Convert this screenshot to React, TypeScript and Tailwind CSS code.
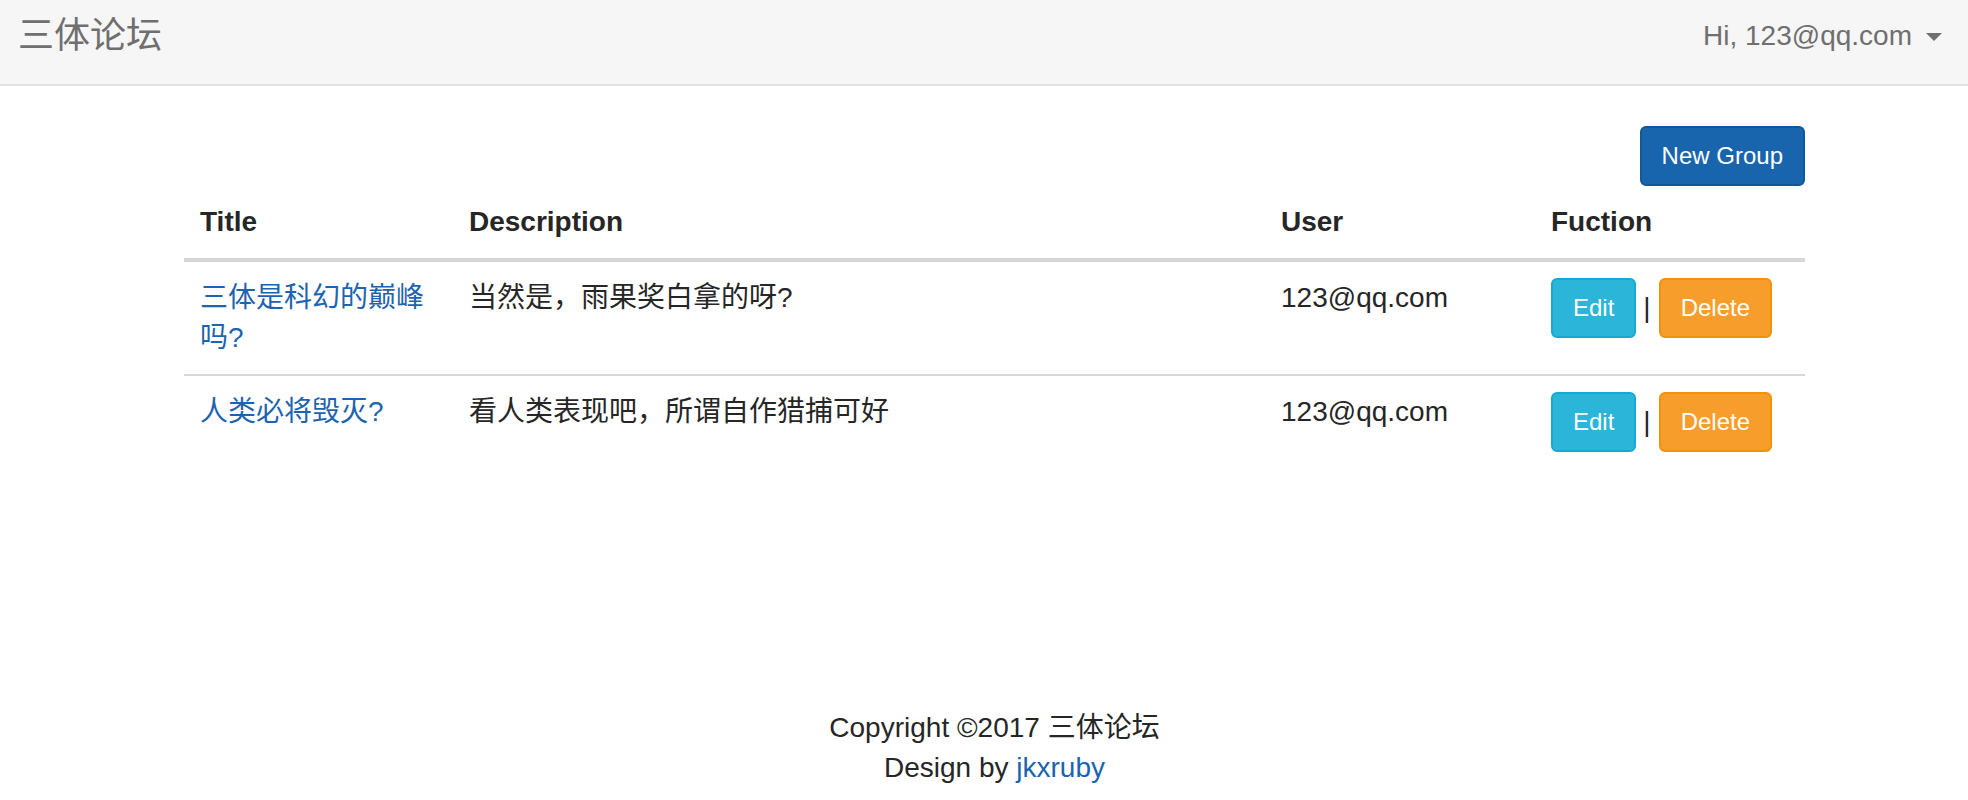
import React from "react";

const font = { fontFamily: '"Liberation Sans", "Noto Sans CJK SC", sans-serif' };

const rows = [
  {
    title: "三体是科幻的巅峰吗?",
    desc: "当然是，雨果奖白拿的呀?",
    user: "123@qq.com",
  },
  {
    title: "人类必将毁灭?",
    desc: "看人类表现吧，所谓自作猎捕可好",
    user: "123@qq.com",
  },
];

export default function App() {
  return (
    <div
      className="min-h-[800px] bg-white text-[#262626] text-[28px] leading-[40px] font-['Liberation_Sans','Noto_Sans_CJK_SC',sans-serif]"
      style={font}
    >
      {/* Navbar */}
      <nav className="h-[86px] bg-[#f6f6f6] border-b-2 border-[#e2e2e2] flex justify-between items-start">
        <a className="pl-[18px] pt-[18px] text-[36px] leading-[36px] text-[#6f6f6f]">三体论坛</a>
        <div className="pt-[16px] pr-[26px] flex items-center text-[#6f6f6f]">
          <span>Hi, 123@qq.com</span>
          <span className="ml-[14px] mt-[2px] w-0 h-0 border-t-[8px] border-t-[#6f6f6f] border-x-[8px] border-x-transparent" />
        </div>
      </nav>

      {/* Content */}
      <div className="ml-[184px] w-[1621px] pt-[40px]">
        <div className="flex justify-end">
          <button className="h-[60px] px-[20px] text-[24px] leading-[36px] text-white bg-[#1865ae] border-2 border-[#11579a] rounded-[6px]">
            New Group
          </button>
        </div>

        <table className="w-[1621px] table-fixed border-separate border-spacing-0">
          <colgroup>
            <col className="w-[269px]" />
            <col className="w-[812px]" />
            <col className="w-[270px]" />
            <col className="w-[270px]" />
          </colgroup>
          <thead>
            <tr>
              {["Title", "Description", "User", "Fuction"].map((h) => (
                <th
                  key={h}
                  className="text-left font-bold p-[16px] border-b-4 border-[#d7d7d7] align-bottom"
                >
                  {h}
                </th>
              ))}
            </tr>
          </thead>
          <tbody>
            {rows.map((r, i) => {
              const b = i < rows.length - 1 ? "border-b-2 border-[#d7d7d7]" : "";
              return (
                <tr key={i}>
                  <td className={`p-[16px] align-top ${b}`}>
                    <a className="text-[#1c64b0]">{r.title}</a>
                  </td>
                  <td className={`p-[16px] align-top ${b}`}>{r.desc}</td>
                  <td className={`p-[16px] align-top ${b}`}>{r.user}</td>
                  <td className={`p-[16px] align-top ${b}`}>
                    <div className="flex items-center">
                      <button className="h-[60px] px-[20px] text-[24px] leading-[36px] text-white bg-[#2bb5d9] border-2 border-[#14aad3] rounded-[6px]">
                        Edit
                      </button>
                      <span className="ml-[7px] mr-[8px] text-[#262626]">|</span>
                      <button className="h-[60px] px-[20px] text-[24px] leading-[36px] text-white bg-[#f79d2b] border-2 border-[#f3910f] rounded-[6px]">
                        Delete
                      </button>
                    </div>
                  </td>
                </tr>
              );
            })}
          </tbody>
        </table>

        <footer className="mt-[240px] text-center">
          <div>Copyright ©2017 三体论坛</div>
          <div>
            Design by <a className="text-[#1c64b0]">jkxruby</a>
          </div>
        </footer>
      </div>
    </div>
  );
}
